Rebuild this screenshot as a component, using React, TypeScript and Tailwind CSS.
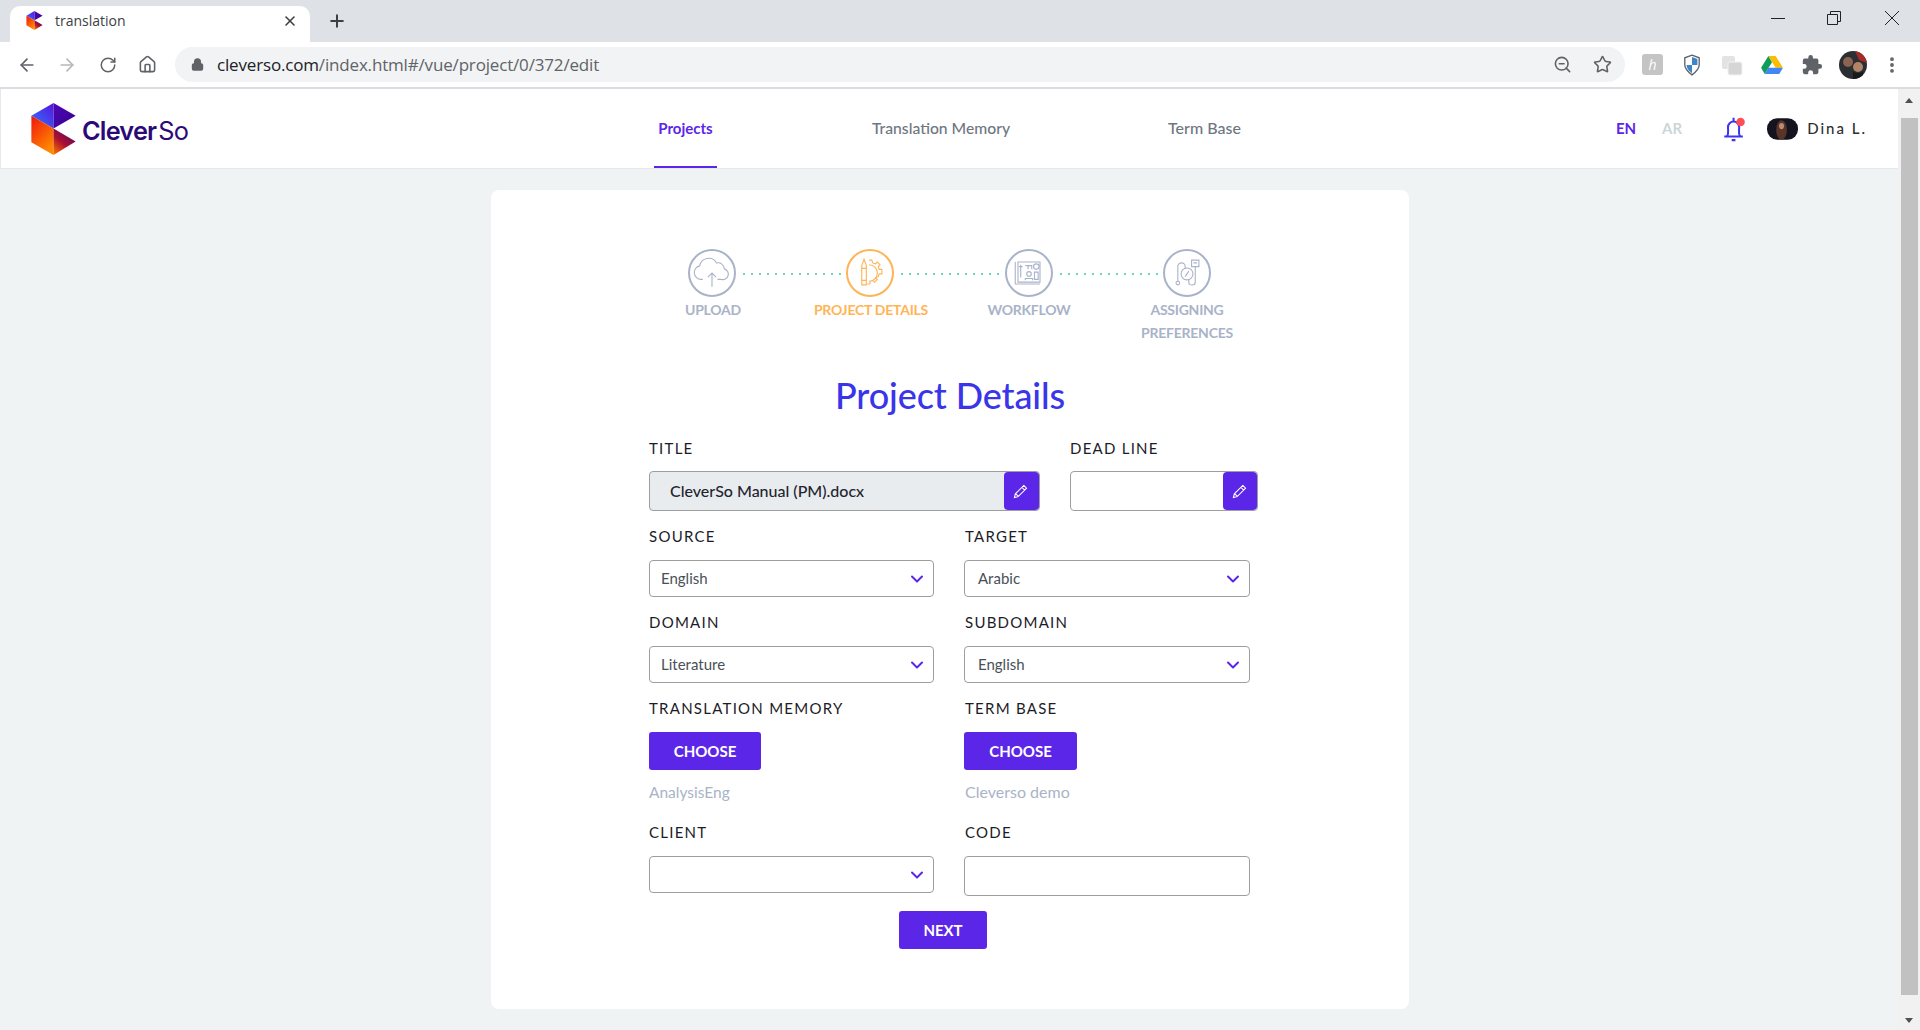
import { ArrowLeft, ArrowRight, ChevronDown, Home, Lock, MoreVertical, Plus, RotateCw, Star, X, ZoomOut } from "lucide-react";

const font = "font-['Lato',sans-serif]";

function Logo({ className }: { className: string }) {
  return (
    <svg viewBox="0 0 132 155" className={className}>
      <defs>
        <linearGradient id="logoA" x1="0" y1="1" x2="1" y2="0">
          <stop offset="0" stopColor="#2a7bff" />
          <stop offset="1" stopColor="#5a12dc" />
        </linearGradient>
        <linearGradient id="logoB" x1="0" y1="0" x2="1" y2="1">
          <stop offset="0" stopColor="#4d08b8" />
          <stop offset="1" stopColor="#37008c" />
        </linearGradient>
        <linearGradient id="logoC" x1="0" y1="0" x2="0.6" y2="1">
          <stop offset="0" stopColor="#f0140c" />
          <stop offset="1" stopColor="#ff8a00" />
        </linearGradient>
        <linearGradient id="logoD" x1="0.9" y1="0" x2="0.2" y2="1">
          <stop offset="0" stopColor="#3a0a70" />
          <stop offset="0.6" stopColor="#b01030" />
          <stop offset="1" stopColor="#f06a00" />
        </linearGradient>
      </defs>
      <polygon points="0,38 66,0 66,76" fill="url(#logoA)" />
      <polygon points="66,0 132,38 66,76" fill="url(#logoB)" />
      <polygon points="0,38 66,76 66,155 0,117" fill="url(#logoC)" />
      <polygon points="66,76 132,115 66,155" fill="url(#logoD)" />
    </svg>
  );
}

function ChromeBar() {
  return (
    <div className="font-['Open_Sans',sans-serif]">
      <div className="flex h-[42px] items-end bg-[#dee1e6] pl-[10px]">
        <div className="flex h-[36px] w-[300px] items-center rounded-t-[10px] bg-white pb-[7px] pl-[16px] pr-[12px]">
          <Logo className="h-[19px] w-[17px]" />
          <span className="ml-[12px] text-[14px] text-[#3c4043]">translation</span>
          <X size={16} strokeWidth={2.4} className="ml-auto text-[#3c4043]" />
        </div>
        <Plus size={20} strokeWidth={2.4} className="mb-[11px] ml-[17px] text-[#3c4043]" />
        <div className="ml-auto flex h-[36px] items-start pr-[20px] pt-[4px] text-[#222]">
          <svg viewBox="0 0 16 16" className="h-[16px] w-[16px]" fill="none" stroke="currentColor">
            <path d="M1 8.5h14" />
          </svg>
          <svg viewBox="0 0 16 16" className="ml-[40px] h-[16px] w-[16px]" fill="none" stroke="currentColor">
            <path d="M1.5 4.5h10v10h-10z M4.5 4.5v-3h10v10h-3" />
          </svg>
          <svg viewBox="0 0 16 16" className="ml-[42px] h-[16px] w-[16px]" fill="none" stroke="currentColor">
            <path d="M1 1l14 14M15 1L1 15" />
          </svg>
        </div>
      </div>
      <div className="flex h-[45px] items-center bg-white">
        <ArrowLeft size={20} strokeWidth={2} className="ml-[17px] text-[#5f6368]" />
        <ArrowRight size={20} strokeWidth={2} className="ml-[20px] text-[#b6b8bb]" />
        <RotateCw size={18} strokeWidth={2} className="ml-[22px] text-[#5f6368]" />
        <Home size={19} strokeWidth={2} className="ml-[21px] text-[#5f6368]" />
        <div className="ml-[18px] flex h-[35px] w-[1450px] items-center rounded-full bg-[#f1f3f4] pl-[16px] pr-[13px]">
          <Lock size={13} strokeWidth={3} fill="#5f6368" className="text-[#5f6368]" />
          <div className="ml-[13px] text-[17px] tracking-[-0.17px] text-[#5f6368]">
            <span className="text-[#202124]">cleverso.com</span>/index.html#/vue/project/0/372/edit
          </div>
          <ZoomOut size={19} strokeWidth={2} className="ml-auto text-[#5f6368]" />
          <Star size={19} strokeWidth={2} className="ml-[21px] text-[#5f6368]" />
        </div>
        <div className="ml-[17px] flex h-[21px] w-[21px] items-center justify-center rounded-[3px] bg-[#c4c4c4] text-[14px] italic text-white">
          h
        </div>
        <svg viewBox="0 0 20 24" className="ml-[20px] h-[22px] w-[18px]">
          <path d="M10 1l8 3v8c0 5-4 8-8 11-4-3-8-6-8-11V4z" fill="#fff" stroke="#5f6368" strokeWidth="1.5" />
          <path d="M10 3l6 2.3V12h-6zM10 12v9c-3-2-6-5-6-9z" fill="#3d85c6" />
        </svg>
        <svg viewBox="0 0 22 22" className="ml-[20px] h-[22px] w-[22px]">
          <rect x="1" y="2" width="13" height="13" rx="2" fill="#e3e3e3" />
          <rect x="7" y="8" width="14" height="13" rx="2" fill="#d6d6d6" stroke="#f2f2f2" />
        </svg>
        <svg viewBox="0 0 24 22" className="ml-[18px] h-[20px] w-[22px]">
          <path d="M8 1h8l8 13h-8z" fill="#fbbc04" />
          <path d="M8 1l4 7-8 13-4-7z" fill="#0f9d58" />
          <path d="M8 14h16l-4 7H4z" fill="#4285f4" />
        </svg>
        <svg viewBox="0 0 24 24" className="ml-[18px] h-[22px] w-[22px]" fill="#5f6368">
          <path d="M20.5 11H19V7a2 2 0 0 0-2-2h-4V3.5a2.5 2.5 0 0 0-5 0V5H4a2 2 0 0 0-2 2v3.8h1.5a2.7 2.7 0 0 1 0 5.4H2V20a2 2 0 0 0 2 2h3.8v-1.5a2.7 2.7 0 0 1 5.4 0V22H17a2 2 0 0 0 2-2v-4h1.5a2.5 2.5 0 0 0 0-5z" />
        </svg>
        <svg viewBox="0 0 28 28" className="ml-[16px] h-[28px] w-[28px]">
          <circle cx="14" cy="14" r="14" fill="#2b2f33" />
          <path d="M16 0a14 14 0 0 1 12 12l-8-3z" fill="#a52a2a" />
          <circle cx="9" cy="11" r="5" fill="#8a6450" />
          <circle cx="19" cy="16" r="5" fill="#b08468" />
          <path d="M14 20c2 3 8 3 10 0v4a14 14 0 0 1-10 4z" fill="#191919" />
        </svg>
        <MoreVertical size={20} strokeWidth={2.6} className="ml-[15px] text-[#5f6368]" />
      </div>
      <div className="h-[2px] bg-[#dadce0]" />
    </div>
  );
}

function NavBar() {
  return (
    <nav className={`flex h-[80px] items-center border-b border-l border-[#e4e8ef] bg-white pr-[31px] ${font}`}>
      <div className="flex w-[653px] items-center pl-[30px]">
        <Logo className="h-[52px] w-[45px]" />
        <div className="ml-[6px] mt-[4px] font-['Inter',sans-serif] text-[25.3px] tracking-[-0.8px] text-[#2b0a78]">
          <span className="font-semibold">Clever</span>
          <span className="ml-[2px] font-normal">So</span>
        </div>
      </div>
      <div className="flex h-full w-[63px] items-center justify-center border-b-2 border-[#5c26e8] pt-[1px] text-[15px] font-bold text-[#5c26e8]">
        Projects
      </div>
      <div className="ml-[155px] text-[15.7px] font-medium text-[#6e7682]">Translation Memory</div>
      <div className="mb-[1px] ml-[158px] text-[16px] font-medium text-[#6e7682]">Term Base</div>
      <div className="ml-auto text-[15px] font-bold text-[#5c26e8]">EN</div>
      <div className="ml-[26px] text-[15px] font-bold text-[#ccd6d6]">AR</div>
      <svg viewBox="0 0 24 28" className="ml-[41px] h-[26px] w-[23px]" fill="none" stroke="#3c34f0" strokeWidth="2.2">
        <path d="M1 22h20M4 22c2-3 1-6 1-10a6 6 0 0 1 12 0c0 4-1 7 1 10M11 2v3M9 26h4" />
        <circle cx="18.5" cy="6.5" r="4.6" fill="#ff4d55" stroke="none" />
      </svg>
      <svg viewBox="0 0 32 22" className="ml-[21px] h-[22px] w-[31px]">
        <rect width="32" height="22" rx="10.5" fill="#141420" />
        <ellipse cx="15" cy="12" rx="5.5" ry="10" fill="#5a3428" />
        <ellipse cx="15" cy="8" rx="2.6" ry="3.2" fill="#b88c76" />
      </svg>
      <div className="ml-[9px] text-[15px] font-medium tracking-[2px] text-[#2e2e2e]">Dina L.</div>
    </nav>
  );
}

function StepIcon({ name }: { name: string }) {
  if (name === "upload") {
    return (
      <g>
        <path d="M14 31h-2a7.5 7.5 0 0 1-1.5-14.8A10 10 0 0 1 29 13a7 7 0 0 1 8.5 6.5A6 6 0 0 1 34 31h-4" />
        <path d="M24 39V24M19.5 28.5L24 24l4.5 4.5" />
      </g>
    );
  }
  if (name === "details") {
    return (
      <g>
        <path d="M15 16l2.5-7 2.5 7v21h-5zM15 32h5M15 19h5" />
        <path d="M23 15a9 9 0 0 1 0 18M23 10l3 0 1 3 3 1 2-2 3 3-2 2 1 3 3 0v5l-3 0-1 3-3 1 2 2-3 3-2-2-3 1v3h-3" />
      </g>
    );
  }
  if (name === "workflow") {
    return (
      <g>
        <path d="M12 12h24v22H12zM9 12v24h27" />
        <path d="M15 15v14M13 17h4M20 16h7v4M23 16v4" />
        <circle cx="32" cy="17" r="3" />
        <circle cx="24" cy="25" r="2.5" />
        <path d="M20 32v-2h8v2M30 23h4v8h-4z" />
      </g>
    );
  }
  return (
    <g>
      <circle cx="24" cy="25" r="6.5" />
      <path d="M22 28l4-6" />
      <circle cx="14" cy="35" r="2" />
      <path d="M14 33V17a4 4 0 0 1 8 0v2M26 31v4c0 3 7 3 7 -1V17" />
      <path d="M29 10h8v7h-8zM31 13h4" />
    </g>
  );
}

function Step({ name, active }: { name: string; active?: boolean }) {
  return (
    <div
      className={`h-[48px] w-[48px] shrink-0 rounded-full border-2 ${active ? "border-[#ffb457]" : "border-[#a9b3c8]"}`}
    >
      <svg
        viewBox="0 0 48 48"
        className="h-full w-full"
        fill="none"
        stroke={active ? "#ffb457" : "#a9b3c8"}
        strokeWidth="1.2"
      >
        <StepIcon name={name} />
      </svg>
    </div>
  );
}

function Dots() {
  return (
    <div className="mx-[4px] mt-[2px] h-[4px] flex-1 bg-[radial-gradient(circle,#6fd3c4_1px,transparent_1.3px)] bg-[length:8px_4px]" />
  );
}

function Stepper() {
  return (
    <div className="flex flex-col items-center">
      <div className="mr-[1px] flex h-[48px] w-[523px] items-center">
        <Step name="upload" />
        <Dots />
        <Step name="details" active />
        <Dots />
        <Step name="workflow" />
        <Dots />
        <Step name="assign" />
      </div>
      <div className="mt-[1px] grid w-[632px] grid-cols-4 text-center text-[14px] font-bold leading-[23px] tracking-[-0.25px] text-[#a9b3c8]">
        <div>UPLOAD</div>
        <div className="text-[#ffb457]">PROJECT DETAILS</div>
        <div>WORKFLOW</div>
        <div>
          ASSIGNING
          <br />
          PREFERENCES
        </div>
      </div>
    </div>
  );
}

function Label({ children, right }: { children: string; right?: boolean }) {
  return (
    <div
      className={`h-[20px] text-[15px] font-normal leading-[20px] tracking-[1.25px] text-[#1c1c28] ${right ? "ml-[1px]" : ""}`}
    >
      {children}
    </div>
  );
}

function Select({ label, value, right }: { label: string; value: string; right?: boolean }) {
  return (
    <div>
      <Label right={right}>{label}</Label>
      <div
        className={`mt-[14px] flex h-[37px] items-center rounded-[4px] border border-[#9e9e9e] bg-white pr-[6px] text-[15px] text-[#495057] ${right ? "pl-[13px]" : "pl-[11px]"}`}
      >
        {value}
        <ChevronDown size={20} strokeWidth={2.4} className="ml-auto text-[#5c26e8]" />
      </div>
    </div>
  );
}

function EditField({ label, value, className }: { label: string; value?: string; className: string }) {
  return (
    <div className={className}>
      <Label>{label}</Label>
      <div
        className={`mt-[13px] flex h-[40px] items-center rounded-[4px] border border-[#9e9e9e] pl-[20px] text-[16px] font-medium text-[#24242e] ${value ? "bg-[#e9ecef]" : "bg-white"}`}
      >
        {value}
        <div
          className={`ml-auto flex h-full items-center justify-center rounded-[4px] bg-[#5c26e8] pr-[2px] ${value ? "w-[35px]" : "w-[34px]"}`}
        >
          <svg viewBox="0 0 16 16" className="h-[15px] w-[15px]" fill="none" stroke="#fff" strokeWidth="1.1">
            <path d="M11.5 1.5l3 3-9 9-4 1 1-4zM9.5 3.5l3 3M3 10.5l3 3" />
          </svg>
        </div>
      </div>
    </div>
  );
}

function Choose({ label, value, w, right }: { label: string; value: string; w: string; right?: boolean }) {
  return (
    <div>
      <Label right={right}>{label}</Label>
      <button className={`mt-[14px] block h-[38px] ${w} rounded-[3px] bg-[#5c26e8] text-[15px] font-bold text-white`}>
        CHOOSE
      </button>
      <div className={`mt-[12px] leading-[20px] text-[#a9b3c8] ${right ? "ml-[1px] text-[16px]" : "text-[15.5px]"}`}>
        {value}
      </div>
    </div>
  );
}

export default function App() {
  return (
    <div className="flex h-[1030px] flex-col overflow-hidden bg-[#f0f3f4]">
      <ChromeBar />
      <div className="flex min-h-0 flex-1">
        <div className="min-w-0 flex-1">
          <NavBar />
          <main className={`ml-[491px] mt-[21px] h-[819px] w-[918px] rounded-[8px] bg-white pt-[59px] ${font}`}>
            <Stepper />
            <h1 className="mt-[29px] text-center text-[36px] font-medium leading-[44px] tracking-[-0.1px] text-[#3a35e8]">
              Project Details
            </h1>
            <form className="ml-[158px] mt-[21px] w-[610px]">
              <div className="flex gap-x-[30px]">
                <EditField label="TITLE" value="CleverSo Manual (PM).docx" className="w-[391px]" />
                <EditField label="DEAD LINE" className="w-[188px]" />
              </div>
              <div className="mt-[15px] grid w-[601px] grid-cols-[285px_286px] gap-x-[30px]">
                <Select label="SOURCE" value="English" />
                <Select label="TARGET" value="Arabic" right />
              </div>
              <div className="mt-[15px] grid w-[601px] grid-cols-[285px_286px] gap-x-[30px]">
                <Select label="DOMAIN" value="Literature" />
                <Select label="SUBDOMAIN" value="English" right />
              </div>
              <div className="mt-[15px] grid w-[601px] grid-cols-[285px_286px] gap-x-[30px]">
                <Choose label="TRANSLATION MEMORY" value="AnalysisEng" w="w-[112px]" />
                <Choose label="TERM BASE" value="Cleverso demo" w="w-[113px]" right />
              </div>
              <div className="mt-[20px] grid w-[601px] grid-cols-[285px_286px] gap-x-[30px]">
                <Select label="CLIENT" value="" />
                <div>
                  <Label right>CODE</Label>
                  <div className="mt-[14px] h-[40px] rounded-[4px] border border-[#9e9e9e] bg-white" />
                </div>
              </div>
              <button className="ml-[250px] mt-[15px] block h-[38px] w-[88px] rounded-[3px] bg-[#5c26e8] text-[15px] font-bold text-white">
                NEXT
              </button>
            </form>
          </main>
        </div>
        <div className="flex w-[22px] flex-col items-center bg-[#f1f1f1] pt-[9px]">
          <div className="h-0 w-0 border-x-[4.5px] border-b-[5px] border-x-transparent border-b-[#505050]" />
          <div className="mt-[15px] h-[877px] w-[17px] bg-[#c1c1c1]" />
          <div className="mt-[23px] h-0 w-0 border-x-[4.5px] border-t-[5px] border-x-transparent border-t-[#505050]" />
        </div>
      </div>
    </div>
  );
}
